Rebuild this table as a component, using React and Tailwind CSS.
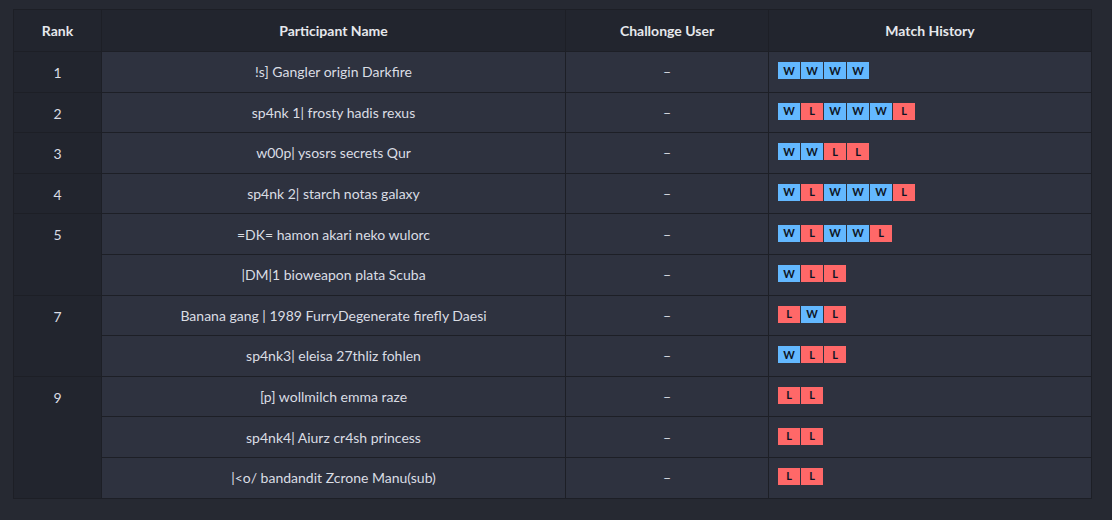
import React from "react";

const rows = [
  { rank: "1", span: 1, name: "!s] Gangler origin Darkfire", history: "WWWW" },
  { rank: "2", span: 1, name: "sp4nk 1| frosty hadis rexus", history: "WLWWWL" },
  { rank: "3", span: 1, name: "w00p| ysosrs secrets Qur", history: "WWLL" },
  { rank: "4", span: 1, name: "sp4nk 2| starch notas galaxy", history: "WLWWWL" },
  { rank: "5", span: 2, name: "=DK= hamon akari neko wulorc", history: "WLWWL" },
  { rank: null, name: "|DM|1 bioweapon plata Scuba", history: "WLL" },
  { rank: "7", span: 2, name: "Banana gang | 1989 FurryDegenerate firefly Daesi", history: "LWL" },
  { rank: null, name: "sp4nk3| eleisa 27thliz fohlen", history: "WLL" },
  { rank: "9", span: 3, name: "[p] wollmilch emma raze", history: "LL" },
  { rank: null, name: "sp4nk4| Aiurz cr4sh princess", history: "LL" },
  { rank: null, name: "|<o/ bandandit Zcrone Manu(sub)", history: "LL" },
];

const Badge = ({ r }) => (
  <span
    className={`w-[22px] h-[17px] flex items-center justify-center text-[11px] font-bold text-[#0d1424] ${
      r === "W" ? "bg-[#63b8ff]" : "bg-[#ff6868]"
    }`}
  >
    {r}
  </span>
);

export default function App() {
  return (
    <div
      className="w-[1112px] h-[520px] bg-[#262932] pt-[9px] pl-[13px]"
      style={{ fontFamily: "Lato, 'Noto Sans', sans-serif" }}
    >
      <table className="w-[1078px] border-collapse text-[14px] text-[#dadde4] table-fixed">
        <colgroup>
          <col className="w-[88px]" />
          <col className="w-[464px]" />
          <col className="w-[203px]" />
          <col className="w-[323px]" />
        </colgroup>
        <thead>
          <tr className="h-[42px] bg-[#22252e] text-[#e6e8ec] font-bold">
            <th className="border border-[#1d1f26] font-bold">Rank</th>
            <th className="border border-[#1d1f26] font-bold">Participant Name</th>
            <th className="border border-[#1d1f26] font-bold">Challonge User</th>
            <th className="border border-[#1d1f26] font-bold">Match History</th>
          </tr>
        </thead>
        <tbody>
          {rows.map((row, i) => (
            <tr key={i} className="h-[40.6px]">
              {row.rank !== null && (
                <td
                  rowSpan={row.span}
                  className="bg-[#22252e] border border-[#1d1f26] text-center align-top pt-[10px]"
                >
                  {row.rank}
                </td>
              )}
              <td className="bg-[#2e323f] border border-[#1d1f26] text-center">{row.name}</td>
              <td className="bg-[#2e323f] border border-[#1d1f26] text-center">–</td>
              <td className="bg-[#2e323f] border border-[#1d1f26] pl-[9px] pb-[2px]">
                <div className="flex gap-px">
                  {row.history.split("").map((r, j) => (
                    <Badge key={j} r={r} />
                  ))}
                </div>
              </td>
            </tr>
          ))}
        </tbody>
      </table>
    </div>
  );
}
